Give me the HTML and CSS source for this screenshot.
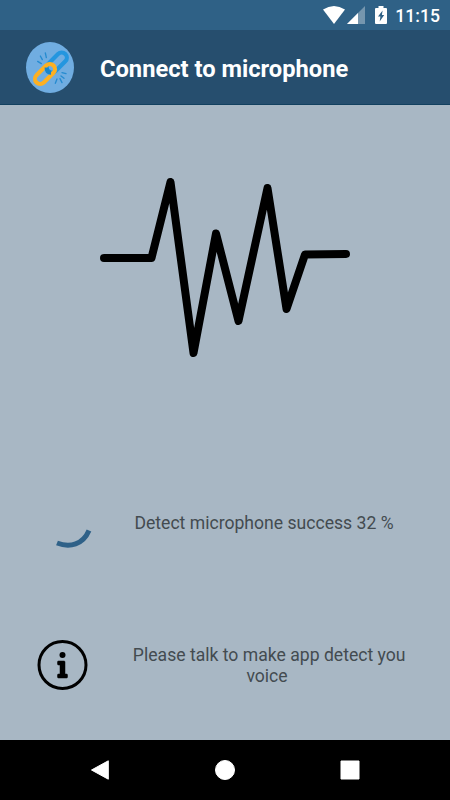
FILE: index.html
```
<!DOCTYPE html>
<html lang="en">

<head>
    <meta charset="UTF-8">
    <meta name="viewport" content="width=device-width, initial-scale=1.0">
    <title>Connect to microphone</title>
    <link rel="stylesheet" href="styles.css">
</head>

<body>
    <div class="screen">

        <div class="statusBar">
            <svg class="wifi" viewBox="0 0 22 18">
                <path d="M0 3.6 Q11 -3.4 22 3.6 L11 18 Z" fill="#fff" />
            </svg>
            <svg class="signal" viewBox="0 0 18 18">
                <path d="M18 0 V18 H0 Z" fill="#7596ae" />
                <path d="M11 7 V18 H0 Z" fill="#fff" />
            </svg>
            <svg class="battery" viewBox="0 0 12 18">
                <path d="M3.5 0 h5 v2 H11 a1 1 0 0 1 1 1 V17 a1 1 0 0 1 -1 1 H1 a1 1 0 0 1 -1 -1 V3 a1 1 0 0 1 1 -1 H3.5 Z" fill="#fff" />
                <path d="M7.6 4.5 L3 10.600 H5.400 L4.700 15.500 L9.200 9 H6.900 Z" fill="#2f6186" />
            </svg>
            <span class="time">11:15</span>
        </div>

        <header class="appBar">
            <svg class="logo" viewBox="33 36 144 153" preserveAspectRatio="none">
                <ellipse cx="105" cy="112.5" rx="72" ry="76.5" fill="#70ade1" />
                <g fill="none" stroke-width="12.5">
                    <rect x="-36" y="-15.500" width="72" height="31" rx="15.500" stroke="#2496df" transform="translate(125.500 97.500) rotate(-45)" />
                    <rect x="-36" y="-15.500" width="72" height="31" rx="15.500" stroke="#fdb022" transform="translate(90 132) rotate(-45)" />
                    <path d="M95 113 Q94 128 108 128" stroke="#1785cc" />
                </g>
                <path d="M76 78 L82 89 M91 69 L94 83 M68 94 L79 101 M121 160 L126 147 M141 158 L135 146 M138 138 L147 145 M141 128 L153 131" fill="none" stroke="#258bd0" stroke-width="4" stroke-linecap="round" />
            </svg>
            <h1 class="title">Connect to microphone</h1>
        </header>

        <main class="content">
            <svg class="wave" viewBox="0 0 250 180">
                <path d="M4 81 H51.500 L70.500 5 L93.500 176 L116 56.500 L138.500 144 L167.500 11 L186.500 132 L205 77.500 L246 77" />
            </svg>

            <div class="row detect">
                <svg class="spinner" viewBox="0 0 50 50">
                    <path d="M19 43 C32 48 45 44.500 51 30.500" />
                </svg>
                <p class="text">Detect microphone success 32 %</p>
            </div>

            <div class="row talk">
                <svg class="info" viewBox="0 0 50 50">
                    <circle cx="24.500" cy="25" r="23.500" fill="none" stroke="#000" stroke-width="3" />
                    <circle cx="24.500" cy="15" r="3" />
                    <path d="M20.500 21 H26 a1 1 0 0 1 1 1 V34 H28.500 a1 1 0 0 1 1 1 V37 a1 1 0 0 1 -1 1 H20.500 a1 1 0 0 1 -1 -1 V35 a1 1 0 0 1 1 -1 H22 V25 H20.500 a1 1 0 0 1 -1 -1 V22 a1 1 0 0 1 1 -1 Z" stroke="#000" stroke-width=".5" />
                </svg>
                <p class="text">&nbsp;Please talk to make app detect you voice</p>
            </div>
        </main>

        <nav class="navBar">
            <svg viewBox="0 0 20 20">
                <path d="M18.300 .8 V19.200 L1.500 10 Z" />
            </svg>
            <svg viewBox="0 0 20 20">
                <circle cx="10" cy="10" r="9.500" />
            </svg>
            <svg viewBox="0 0 20 20">
                <path d="M1 1 H19 V19 H1 Z" />
            </svg>
        </nav>

    </div>
</body>

</html>
```
FILE: styles.css
```
body {
    margin: 0;
    padding: 0;
    font-family: Roboto, sans-serif;
}

.screen {
    display: flex;
    flex-direction: column;
    width: 450px;
    height: 800px;
    overflow: hidden;
    background: #a8b7c4;
}

.statusBar {
    display: flex;
    align-items: center;
    justify-content: flex-end;
    box-sizing: border-box;
    height: 30px;
    padding-right: 10px;
    background: #2f6186;
}

.wifi {
    width: 22px;
    height: 18px;
}

.signal {
    width: 18px;
    height: 18px;
    margin-left: 2px;
}

.battery {
    width: 12px;
    height: 18px;
    margin-left: 10px;
}

.time {
    margin-left: 8px;
    padding-top: 2px;
    color: #fff;
    font-size: 17.6px;
    font-weight: 500;
    line-height: 28px;
}

.appBar {
    display: flex;
    align-items: center;
    box-sizing: border-box;
    height: 75px;
    padding-left: 26px;
    background: #264e6e;
    border-bottom: 1px solid #12405f;
}

.logo {
    width: 48px;
    height: 51px;
}

.title {
    margin: 3px 0 0 26px;
    color: #fff;
    font-size: 23.7px;
    font-weight: 700;
    line-height: 28px;
    white-space: nowrap;
}

.content {
    display: flex;
    flex: 1;
    flex-direction: column;
}

.wave {
    width: 250px;
    height: 180px;
    margin: 72px 0 0 100px;
    fill: none;
    stroke: #000;
    stroke-width: 8;
    stroke-linecap: round;
    stroke-linejoin: round;
}

.row {
    display: flex;
    align-items: flex-start;
    padding-left: 38px;
}

.detect {
    margin-top: 143px;
}

.talk {
    margin-top: 90px;
}

.spinner,
.info {
    flex: none;
    width: 50px;
    height: 50px;
    overflow: visible;
}

.spinner {
    fill: none;
    stroke: #2f6188;
    stroke-width: 5;
}

.text {
    width: 280px;
    margin: 13px 0 0 36px;
    color: #434b50;
    font-size: 17.6px;
    line-height: 21px;
    text-align: center;
}

.talk .text {
    margin: 5px 0 0 39px;
}

.navBar {
    display: flex;
    align-items: center;
    justify-content: space-between;
    box-sizing: border-box;
    height: 60px;
    padding: 0 90px;
    background: #000;
}

.navBar svg {
    width: 20px;
    height: 20px;
    fill: #fff;
    stroke: #fff;
    stroke-width: 1;
    stroke-linejoin: round;
}
```
